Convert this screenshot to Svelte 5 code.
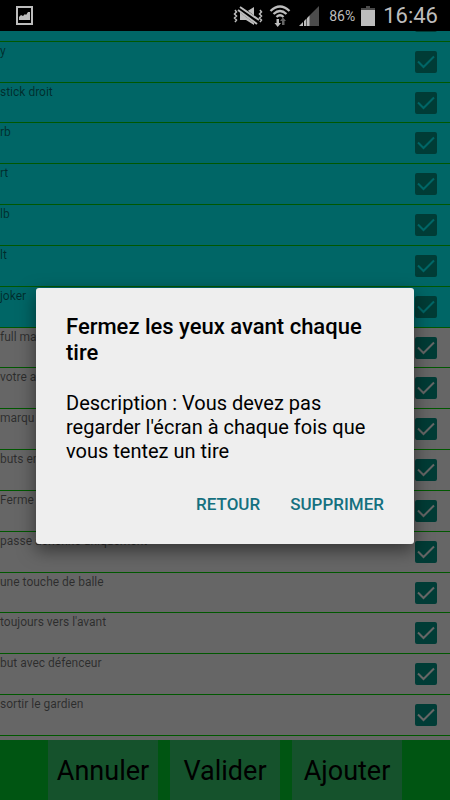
<script>
    let rows = $state([
        { label: '', joker: true, checked: true },
        { label: 'y', joker: true, checked: true },
        { label: 'stick droit', joker: true, checked: true },
        { label: 'rb', joker: true, checked: true },
        { label: 'rt', joker: true, checked: true },
        { label: 'lb', joker: true, checked: true },
        { label: 'lt', joker: true, checked: true },
        { label: 'joker', joker: true, checked: true },
        { label: 'full ma', checked: true },
        { label: 'votre a', checked: true },
        { label: 'marqu', checked: true },
        { label: 'buts en', checked: true },
        { label: 'Ferme', checked: true },
        { label: 'passe aérienne uniquement', checked: true },
        { label: 'une touche de balle', checked: true },
        { label: "toujours vers l'avant", checked: true },
        { label: 'but avec défenceur', checked: true },
        { label: 'sortir le gardien', checked: true }
    ]);

    let open = $state(true);

    function close() {
        open = false;
    }
</script>

<div class="screen">
    <header class="status">
        <svg class="picture" viewBox="0 0 17 19" width="17" height="19">
            <path d="M1 1H16V18H1Z" fill="none" stroke="#bdbdbd" stroke-width="2" />
            <path d="M3 14V11L5 9L7 10L9 8L10 9L12 6H14V14Z" fill="#bdbdbd" />
        </svg>
        <div class="indicators">
            <svg viewBox="0 0 30 20" width="30" height="20">
                <path d="M7 6H13L21 1V19L13 14H7Z" fill="#bdbdbd" />
                <path d="M5 1L26 17" stroke="#000" stroke-width="6" />
                <path d="M7 1L26 14M5 4L24 18" stroke="#bdbdbd" stroke-width="2" />
                <path d="M2 4L3.500 6L1.500 8L3.500 10L1.500 12L3.500 14L2 16M27 4L28.500 6L26.500 8L28.500 10L26.500 12L28.500 14L27 16" fill="none" stroke="#bdbdbd" stroke-width="1.500" />
            </svg>
            <svg viewBox="0 0 22 22" width="22" height="22">
                <path d="M1.500 6Q11 -3 20.500 6M4.500 9Q11 3 17.500 9M7.500 12Q11 8.500 14.500 12" fill="none" stroke="#bdbdbd" stroke-width="2.300" />
                <path d="M7.500 14H10V18H12L8.700 22L5.500 18H7.500Z" fill="#bdbdbd" />
                <path d="M13 20V16H11L14 12.500L17 16H15.500V20Z" fill="#666" />
            </svg>
            <svg class="signal" viewBox="0 0 20 20" width="20" height="20">
                <path d="M10 10L20 0V20H10Z" fill="#4c4c4c" />
                <path d="M0 20L4 16V20ZM5 15L7.500 12.500V20H5ZM8 12L10.500 9.500V20H8Z" fill="#bdbdbd" />
            </svg>
            <span class="percent">86%</span>
            <svg viewBox="0 0 14 20" width="14" height="20">
                <path d="M5 0H9V2H14V4H0V2H5Z" fill="#4c4c4c" />
                <path d="M0 4H14V20H0Z" fill="#bdbdbd" />
            </svg>
            <time class="clock">16:46</time>
        </div>
    </header>

    <main class="content">
        <div class="list">
            {#each rows as row}
                <label class="row" class:joker={row.joker}>
                    <span class="name">{row.label}</span>
                    <span class="check">
                        <input type="checkbox" bind:checked={row.checked} />
                        {#if row.checked}
                            <svg viewBox="0 0 22 22" width="22" height="22">
                                <path d="M3 10.500L8.500 16L19 5.500" />
                            </svg>
                        {/if}
                    </span>
                </label>
            {/each}
        </div>

        <footer class="actions">
            <button>Annuler</button>
            <button>Valider</button>
            <button>Ajouter</button>
        </footer>

        {#if open}
            <div class="overlay">
                <div class="dialog" role="dialog" aria-modal="true" aria-labelledby="dialog-title">
                    <h1 id="dialog-title">Fermez les yeux avant chaque tire</h1>
                    <p>Description : Vous devez pas regarder l'écran à chaque fois que vous tentez un tire</p>
                    <div class="buttons">
                        <button onclick={close}>RETOUR</button>
                        <button onclick={close}>SUPPRIMER</button>
                    </div>
                </div>
            </div>
        {/if}
    </main>
</div>

<style>
    :global(body) {
        margin: 0;
        background: #000;
        font-family: Roboto, "Liberation Sans", sans-serif;
    }
    .screen {
        display: flex;
        flex-direction: column;
        height: 100vh;
        overflow: hidden;
    }
    .status {
        display: flex;
        flex: none;
        align-items: center;
        justify-content: space-between;
        box-sizing: border-box;
        height: 31px;
        padding: 0 12px 0 16px;
        background: #000;
        color: #bdbdbd;
    }
    .indicators {
        display: flex;
        align-items: center;
        gap: 6px;
    }
    .signal {
        margin: 0 4px 0 2px;
    }
    .percent {
        font-size: 14px;
    }
    .clock {
        margin-left: 2px;
        font-size: 22px;
        line-height: 30px;
    }
    .content {
        position: relative;
        display: flex;
        flex: 1;
        flex-direction: column;
        min-height: 0;
        overflow: hidden;
        background: #fff;
    }
    /* scrolled: the first row slides under the status bar */
    .list {
        display: flex;
        flex: 1;
        flex-direction: column;
        min-height: 0;
        margin-top: -31px;
    }
    .list::after {
        content: "";
        height: 4px;
        border-top: 1px solid #00dc00;
    }
    .row {
        display: flex;
        flex: 1;
        justify-content: space-between;
        box-sizing: border-box;
        min-height: 0;
        padding-right: 13px;
        border-top: 1px solid #00dc00;
        --row-bg: #fff;
        background: var(--row-bg);
    }
    .row.joker {
        --row-bg: #0ff;
    }
    .name {
        padding-top: 2px;
        color: rgba(0, 0, 0, 0.56);
        font-size: 12px;
        line-height: 14px;
    }
    .check {
        display: grid;
        align-self: center;
    }
    .check input,
    .check svg {
        grid-area: 1 / 1;
    }
    .check input {
        appearance: none;
        width: 22px;
        height: 22px;
        margin: 0;
        border: 2px solid #009688;
        border-radius: 2px;
    }
    .check input:checked {
        background: #009688;
    }
    .check path {
        fill: none;
        stroke: var(--row-bg);
        stroke-width: 2;
    }
    .check svg {
        pointer-events: none;
    }
    .actions {
        display: flex;
        flex: none;
        justify-content: center;
        gap: 12px;
        height: 60px;
        background: #00d52d;
    }
    .actions button {
        width: 110px;
        padding: 2px 0 0;
        border: 0;
        background: #35cd6e;
        color: #000;
        font-family: inherit;
        font-size: 27px;
    }
    .overlay {
        position: absolute;
        inset: 0;
        display: flex;
        align-items: center;
        padding: 0 36px;
        background: rgba(0, 0, 0, 0.6);
    }
    .dialog {
        flex: 1;
        padding: 26px 30px 22px;
        border-radius: 3px;
        background: #eee;
        box-shadow: 0 6px 18px rgba(0, 0, 0, 0.5);
        color: #000;
    }
    h1 {
        margin: 0;
        font-size: 22px;
        font-weight: 500;
        line-height: 26px;
    }
    p {
        margin: 25px 0 23px;
        font-size: 20px;
        line-height: 24px;
    }
    .buttons {
        display: flex;
        justify-content: flex-end;
        gap: 30px;
    }
    .buttons button {
        padding: 0;
        border: 0;
        background: none;
        color: #15707f;
        font-family: inherit;
        font-size: 17px;
        font-weight: 500;
        line-height: 36px;
    }
</style>
